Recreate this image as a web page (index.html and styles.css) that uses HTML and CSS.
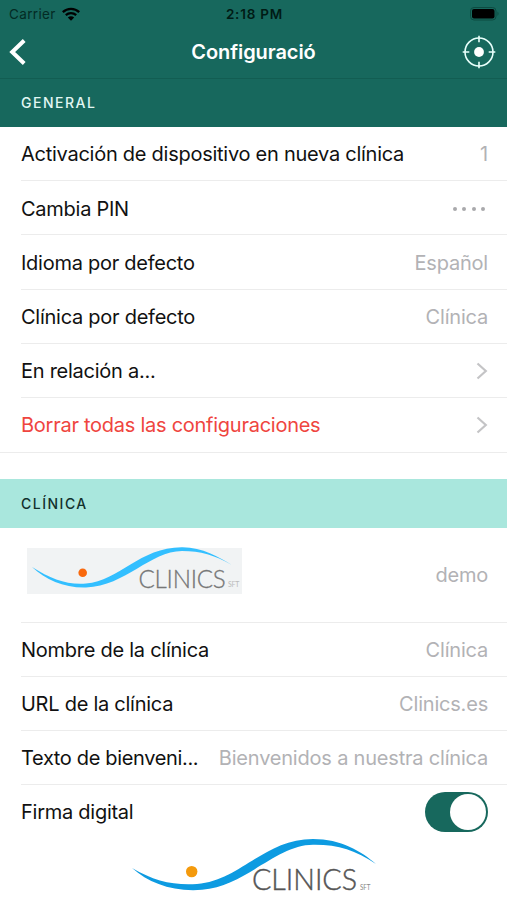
FILE: index.html
```html
<!DOCTYPE html>
<html lang="es">
<head>
<meta charset="utf-8">
<title>Configuració</title>
<link rel="stylesheet" href="styles.css">
</head>
<body>
<header class="top">
  <div class="status">
    <div class="carrier"><span>Carrier</span>
      <svg width="18" height="14" viewBox="0 0 18 14"><g fill="none" stroke="#000" stroke-width="2.3"><path d="M.8 5.1C5.4.8 12.6.8 17.2 5.1"/><path d="M3.8 8.2c3-2.7 7.4-2.7 10.4 0"/></g><path d="M5.8 10.5c1.8-1.6 4.6-1.6 6.4 0L9 13.7z"/></svg>
    </div>
    <div class="time">2:18 PM</div>
    <div class="battery"><svg width="30" height="14" viewBox="0 0 30 14"><rect x=".5" y=".5" width="25.5" height="12.5" rx="3.5" fill="none" stroke="#0d4b41"/><rect x="2" y="2" width="22.5" height="9.5" rx="2"/><path d="M27.5 4.5q2 2.2 0 4.5z" fill="#0d4b41"/></svg></div>
  </div>
  <nav class="nav">
    <svg class="back" width="20" height="28" viewBox="0 0 20 28"><path d="M15.2 2.5 3.2 14l12 11.5" fill="none" stroke="#fff" stroke-width="4"/></svg>
    <h1>Configuració</h1>
    <svg class="target" width="34" height="34" viewBox="0 0 34 34"><g fill="none" stroke="#e8fffb" stroke-width="1.6"><circle cx="17" cy="17" r="14"/><path d="M17 .7v6.6M17 26.7v6.6M.7 17h6.6M26.7 17h6.6"/></g><circle cx="17" cy="17" r="4.9" fill="#fff"/></svg>
  </nav>
</header>
<h2 class="section dark">GENERAL</h2>
<section class="list general">
  <div class="row"><span>Activación de dispositivo en nueva clínica</span><span class="value">1</span></div>
  <div class="row"><span>Cambia PIN</span><span class="dots"><i></i><i></i><i></i><i></i></span></div>
  <div class="row"><span>Idioma por defecto</span><span class="value">Español</span></div>
  <div class="row"><span>Clínica por defecto</span><span class="value">Clínica</span></div>
  <div class="row link"><span>En relación a...</span><svg class="chevron" width="12" height="18" viewBox="0 0 12 18"><path d="m1.5 1.5 8.3 7.5-8.3 7.5"/></svg></div>
  <div class="row link danger"><span>Borrar todas las configuraciones</span><svg class="chevron" width="12" height="18" viewBox="0 0 12 18"><path d="m1.5 1.5 8.3 7.5-8.3 7.5"/></svg></div>
</section>
<h2 class="section light">CLÍNICA</h2>
<section class="list">
  <div class="row logo-row">
    <svg class="logo-small" width="216" height="48" viewBox="26 547 216 48"><rect x="27" y="548" width="215" height="46" fill="#f1f3f4"/><path d="M32 567C51 579 67 585 86 583.5C119 581 140 547 182 547.2C202 547 219 557 232 565C214 555 201 551 182 551C150 551 126 586 86 587.5C64 588 46 580 32 567Z" fill="#33bfff"/><circle cx="82.7" cy="572.7" r="4.3" fill="#f9690e"/><text x="138.5" y="587.5" font-size="25" textLength="87" lengthAdjust="spacingAndGlyphs" class="brand pale">CLINICS</text><text x="228" y="587" font-size="7" textLength="11" lengthAdjust="spacingAndGlyphs" class="sft faint">SFT</text></svg>
    <span class="value">demo</span>
  </div>
  <div class="row"><span>Nombre de la clínica</span><span class="value">Clínica</span></div>
  <div class="row"><span>URL de la clínica</span><span class="value">Clinics.es</span></div>
  <div class="row"><span class="clipped">Texto de bienveni...</span><span class="value">Bienvenidos a nuestra clínica</span></div>
  <div class="row last"><span>Firma digital</span><span class="switch"><span class="knob"></span></span></div>
</section>
<footer class="footer"><svg width="250" height="62" viewBox="130 838 250 62"><path d="M132 868C154 881 173 885.5 197 884C240 881 264 839 313 839C341 839 361 851 376 864C355 850 338 844.5 313 844.8C276 845 246 886 202 889.8C172 892 149 883 132 868Z" fill="#0d9be1"/><circle cx="191.7" cy="871.6" r="5.7" fill="#f49a0c"/><text x="252" y="889.5" font-size="30" textLength="105" lengthAdjust="spacingAndGlyphs" class="brand">CLINICS</text><text x="360" y="890" font-size="8" textLength="10.5" lengthAdjust="spacingAndGlyphs" class="sft">SFT</text></svg></footer>
</body>
</html>
```
FILE: styles.css
```css
* { box-sizing: border-box; }
body {
  margin: 0;
  width: 507px;
  height: 900px;
  overflow: hidden;
  background: #fff;
  color: #111;
  font-family: Inter, "Liberation Sans", sans-serif;
}
svg { display: block; flex: none; }
.top { height: 79px; background: #17685d; border-bottom: 1px solid #125d52; }
.status {
  display: grid;
  grid-template-columns: 1fr auto 1fr;
  align-items: center;
  height: 27px;
  padding: 0 7px 0 9px;
  color: #032b24;
  font-size: 13.5px;
}
.carrier { display: flex; align-items: center; gap: 6px; letter-spacing: .35px; }
.time { color: #001b15; font-weight: 600; letter-spacing: .8px; }
.battery { justify-self: end; }
.nav {
  display: grid;
  grid-template-columns: 1fr auto 1fr;
  align-items: center;
  height: 50px;
  padding: 0 11px 0 10px;
}
.nav h1 { margin: 0 0 0 1px; color: #fff; font-size: 20px; font-weight: 600; letter-spacing: -.08px; }
.back { margin-left: -1px; }
.target { justify-self: end; }
.section {
  display: flex;
  align-items: center;
  margin: 0;
  padding-left: 21px;
  font-size: 14px;
  font-weight: 500;
  letter-spacing: 1.5px;
}
.dark { height: 47.5px; background: #17685d; color: #e2f7f3; }
.light { height: 49px; background: #a9e7dd; color: #12302c; }
.general { height: 352.5px; }
.row {
  display: flex;
  align-items: center;
  justify-content: space-between;
  height: 54.2px;
  margin-left: 21px;
  padding-top: 2px;
  padding-right: 19px;
  border-bottom: 1.5px solid #ececec;
  font-size: 20px;
  letter-spacing: -.26px;
  white-space: nowrap;
}
.general .row { height: 54.35px; }
.general .link { padding-top: 0; }
.clipped { letter-spacing: -.34px; }
.value { color: #b2b2b5; letter-spacing: -.2px; }
.general .danger { margin-left: 0; padding-left: 21px; color: #ef4540; }
.chevron { fill: none; stroke: #c4c4c6; stroke-width: 2.2; }
.dots { display: flex; gap: 5.3px; padding-right: 3px; }
.dots i { width: 4px; height: 4px; border-radius: 50%; background: #a9a9ac; }
.logo-row { height: 94.5px; padding-top: 1px; }
.logo-small { margin-left: 5px; margin-top: -8px; }
.last { padding-top: 0; border: 0; }
.switch { width: 63px; height: 40px; padding: 2px; border-radius: 20px; background: #17685d; }
.knob { display: block; width: 36px; height: 36px; margin-left: auto; border-radius: 50%; background: #fff; }
.brand { font-family: Lato, sans-serif; font-weight: 300; fill: #555; stroke: #555; stroke-width: .45px; }
.pale { fill: #777; stroke: #777; stroke-width: .3px; }
.sft { font-family: Lato, sans-serif; fill: #888; }
.faint { fill: #bbb; }
.footer { display: flex; justify-content: center; margin-top: -1px; padding-left: 3px; }
```
